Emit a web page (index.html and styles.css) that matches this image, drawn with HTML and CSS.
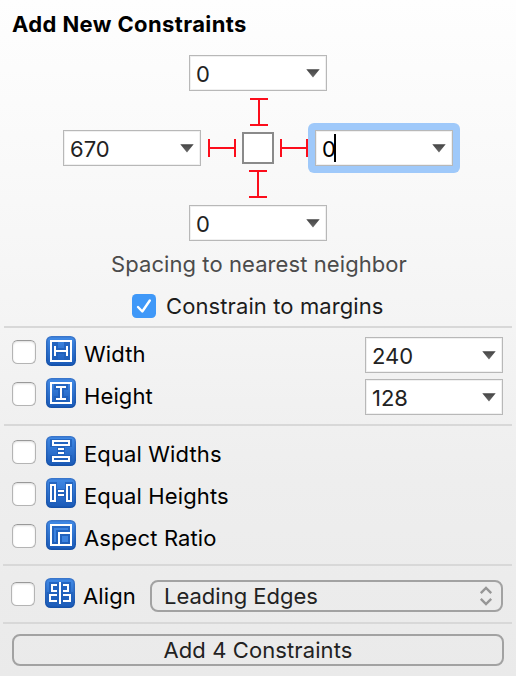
FILE: index.html
```html
<!DOCTYPE html>
<html lang="en">
<head>
<meta charset="utf-8">
<title>Add New Constraints</title>
<link rel="stylesheet" href="styles.css">
</head>
<body>
<svg class="defs" width="0" height="0">
  <defs>
    <linearGradient id="blue" x1="0" y1="0" x2="0" y2="1"><stop offset="0" stop-color="#4089e5"/><stop offset="1" stop-color="#1b5bb9"/></linearGradient>
    <linearGradient id="edge" x1="0" y1="0" x2="0" y2="1"><stop offset="0" stop-color="#3a76cb"/><stop offset="1" stop-color="#1450a8"/></linearGradient>
    <linearGradient id="arrow" x1="0" y1="0" x2="0" y2="1"><stop offset="0" stop-color="#444"/><stop offset="1" stop-color="#6a6a6a"/></linearGradient>
    <symbol id="tri" viewBox="0 0 14 9"><path d="M0.3 0.2H13.7L7 8.6Z" fill="url(#arrow)"/></symbol>
    <symbol id="tile" viewBox="0 0 30 30"><rect width="30" height="30" rx="5.5" fill="url(#edge)"/><rect x="1.5" y="1.5" width="27" height="27" rx="4" fill="url(#blue)"/></symbol>
  </defs>
</svg>
<main class="panel">
  <h1 class="title"><span class="t-title">Add New Constraints</span></h1>

  <section class="spacing">
    <div class="field top"><span>0</span><svg class="tri"><use href="#tri"/></svg></div>
    <svg class="beam beam-top" width="18" height="28"><path d="M0 1H18M9 1V27M0 27H18"/></svg>
    <div class="middle">
      <div class="field"><span>670</span><svg class="tri"><use href="#tri"/></svg></div>
      <svg class="beam" width="28" height="18"><path d="M1 0V18M1 9H27M27 0V18"/></svg>
      <div class="view"></div>
      <svg class="beam beam-right" width="28" height="18"><path d="M1 0V18M1 9H27M27 0V18"/></svg>
      <div class="focus-ring"><div class="field focused"><span>0</span><i class="caret"></i><svg class="tri"><use href="#tri"/></svg></div></div>
    </div>
    <svg class="beam beam-bottom" width="18" height="28"><path d="M0 1H18M9 1V27M0 27H18"/></svg>
    <div class="field bottom"><span>0</span><svg class="tri"><use href="#tri"/></svg></div>
    <p class="hint"><span>Spacing to nearest neighbor</span></p>
    <div class="margins">
      <svg class="checked" width="24" height="24"><rect width="24" height="24" rx="4.5" fill="#3f98f8"/><path d="M6 13L10.3 17.5L17.8 6.5" fill="none" stroke="#fff" stroke-width="2.4" stroke-linecap="round" stroke-linejoin="round"/></svg>
      <span>Constrain to margins</span>
    </div>
  </section>

  <section class="group size">
    <div class="row">
      <i class="check"></i>
      <svg class="icon" viewBox="0 0 30 30"><use href="#tile"/><path class="shade" d="M6 6H12V12H18V6H24V24H18V18H12V24H6Z"/><path class="line" d="M5 5H25V25H5ZM9 10V20M9 15H21M21 10V20"/></svg>
      <span class="label">Width</span>
      <div class="field"><span>240</span><svg class="tri"><use href="#tri"/></svg></div>
    </div>
    <div class="row">
      <i class="check"></i>
      <svg class="icon" viewBox="0 0 30 30"><use href="#tile"/><path class="shade" d="M8 6H22V12H18V18H22V24H8V18H12V12H8Z"/><path class="line" d="M5 5H25V25H5ZM10 9H20M15 9V21M10 21H20"/></svg>
      <span class="label">Height</span>
      <div class="field"><span>128</span><svg class="tri"><use href="#tri"/></svg></div>
    </div>
  </section>

  <section class="group equal">
    <div class="row">
      <i class="check"></i>
      <svg class="icon" viewBox="0 0 30 30"><use href="#tile"/><path class="shade" d="M4 11H11V19H4V27H26V19H19V11H26V3H4Z"/><path class="line" d="M7 5H23V9H7ZM12 13H18M12 17H18M7 21H23V25H7Z"/></svg>
      <span class="label">Equal Widths</span>
    </div>
    <div class="row">
      <i class="check"></i>
      <svg class="icon" viewBox="0 0 30 30"><use href="#tile"/><path class="shade" d="M3 4H11V11H19V4H27V26H19V19H11V26H3Z"/><path class="line" d="M5 7H9V23H5ZM12 13H18M12 17H18M21 7H25V23H21Z"/></svg>
      <span class="label">Equal Heights</span>
    </div>
    <div class="row">
      <i class="check"></i>
      <svg class="icon" viewBox="0 0 30 30"><use href="#tile"/><path class="shade" d="M6 6H24V24H6Z"/><path class="lit" d="M8 8H22V10H10V22H8ZM16 16H22V22H16Z"/><path class="line" d="M5 5H25V25H5ZM13 25V13H25"/></svg>
      <span class="label">Aspect Ratio</span>
    </div>
  </section>

  <section class="group align">
    <div class="row">
      <i class="check"></i>
      <svg class="icon" viewBox="0 0 30 30"><use href="#tile"/><path class="shade" d="M4 4H26V14H28V26H2V14H4Z"/><path class="line" d="M15 4V26M12 7H7V13H12M12 17H5V23H12M18 7H23V13H18M18 17H25V23H18"/></svg>
      <span class="label">Align</span>
      <div class="select"><span>Leading Edges</span><svg width="14" height="20"><path d="M1.8 7.2L7 2L12.2 7.2M1.8 12.8L7 18L12.2 12.8" fill="none" stroke="#969696" stroke-width="2.4"/></svg></div>
    </div>
  </section>

  <section class="group action">
    <button class="add"><span>Add 4 Constraints</span></button>
  </section>
</main>
</body>
</html>
```
FILE: styles.css
```css
* { box-sizing: border-box; }
body { margin: 0; font: 22px/28px Inter, "Liberation Sans", sans-serif; color: #000; }
.defs { display: block; height: 0; }
.panel { width: 516px; height: 676px; overflow: hidden; background: linear-gradient(#fefefe 0, #f9f9f9 170px, #f4f4f4 326px, #eeeeee 480px, #eaeaea 676px); }
span { white-space: nowrap; display: inline-block; }
.title { margin: 0; height: 55px; padding: 10px 0 0 12px; font-size: 22px; line-height: 28px; font-weight: 700; letter-spacing: 0.38px; }

.spacing { display: flex; flex-direction: column; height: 271px; }
.field { flex: none; display: flex; align-items: center; width: 138px; height: 36px; padding: 2px 6px 0 6px; background: #fff; border: 1px solid #b8b8b8; box-shadow: inset 0 0 0 1px #f0f0f0; color: #222; }
.tri { width: 14px; height: 9px; margin-left: auto; margin-top: -1px; }
.top, .bottom { margin-left: 189px; }
.beam { flex: none; display: block; fill: none; stroke: #fc0d1b; stroke-width: 2; }
.beam-top { margin: 7px 0 0 250px; }
.beam-bottom { margin: 0 0 7px 249px; }
.middle { display: flex; align-items: center; height: 44px; padding-left: 63px; }
.middle .beam { margin: 0 6px 0 7px; }
.middle .beam-right { margin: 0 0 0 6px; }
.view { width: 32px; height: 32px; border: 2px solid #8a8a8a; background: #fff; }
.focus-ring { flex: none; padding: 7px; border-radius: 6px; background: #9fc9fa; }
.focused { color: #000; }
.caret { width: 2px; height: 28px; margin: -2px 0 0 -2px; background: #000; }
.hint { margin: 9px 0 0 111px; height: 28px; color: #4b4b4b; letter-spacing: 0.08px; }
.margins { display: flex; align-items: center; gap: 10px; margin: 14px 0 0 132px; height: 28px; color: #1c1c1c; letter-spacing: 0.1px; }

.group { border-top: 2px solid #d8d8d8; margin: 0 4px; padding-left: 8px; }
.size { height: 98px; padding-top: 8px; }
.equal { height: 140px; padding-top: 10px; }
.align { height: 58px; margin-left: 3px; padding-top: 12px; }
.action { height: 52px; margin-left: 3px; padding: 10px 8px 0 9px; }
.row { display: flex; height: 42px; }
.check { flex: none; width: 24px; height: 24px; margin-top: 4px; border: 1px solid #b4b4b4; border-top-color: #999; border-radius: 5.5px; background: #fff; box-shadow: inset 0 1px 2px #ddd; }
.icon { flex: none; width: 30px; height: 30px; margin-left: 10px; }
.line { fill: none; stroke: #fff; stroke-width: 2; }
.shade { fill: #1f5fb9; fill-opacity: .8; }
.lit { fill: #3b82df; }
.label { margin: 4px 0 0 8px; letter-spacing: 0.12px; }
.row .field { margin: 1px 9px 0 auto; }
.select { display: flex; align-items: center; justify-content: space-between; width: 353px; height: 32px; margin: 2px 9px 0 auto; padding: 0 8px 0 12px; border: 2px solid #a2a2a2; border-radius: 8px; color: #222; }
.add { display: flex; align-items: center; justify-content: center; width: 492px; height: 32px; padding: 0; border: 2px solid #a2a2a2; border-radius: 8px; background: transparent; font: inherit; letter-spacing: 0.1px; color: #222; }
```
